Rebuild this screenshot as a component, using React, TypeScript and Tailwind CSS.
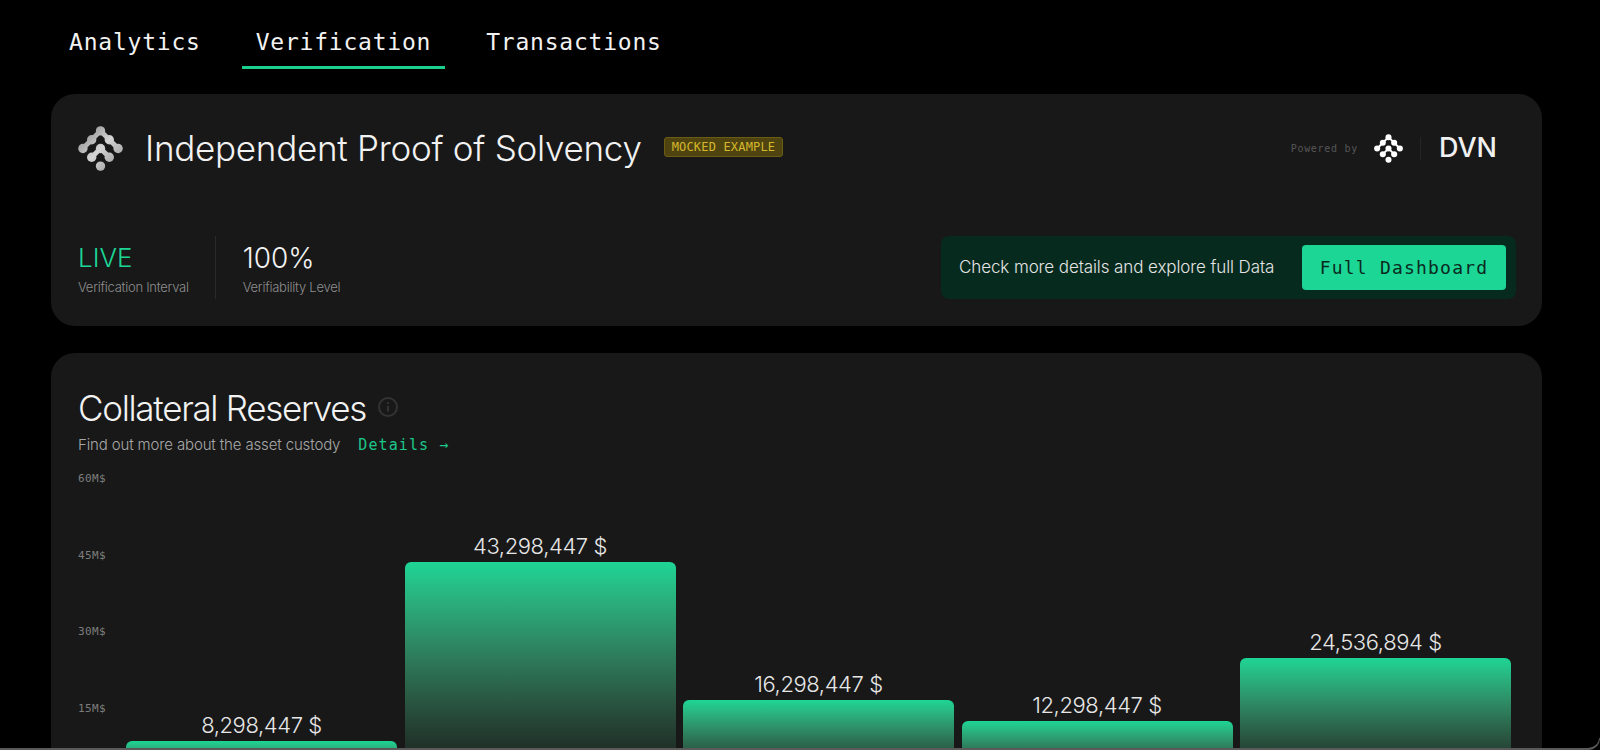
const bars = [
  { label: "8,298,447 $", height: "h-[43px]" },
  { label: "43,298,447 $", height: "h-[222px]" },
  { label: "16,298,447 $", height: "h-[84px]" },
  { label: "12,298,447 $", height: "h-[63px]" },
  { label: "24,536,894 $", height: "h-[126px]" },
];

const axis = ["60M$", "45M$", "30M$", "15M$"];

const mono = "font-['DejaVu_Sans_Mono',monospace]";

const dots = [
  [5, 23],
  [14, 14],
  [23, 5],
  [32, 14],
  [41, 23],
  [14, 32],
  [23, 23],
  [32, 32],
  [23, 41],
];

const Logo = ({ className, color, link }: { className: string; color: string; link: number }) => (
  <svg viewBox="0 0 46 46" className={className} fill="none">
    <defs>
      <linearGradient id="logo-shade" gradientUnits="userSpaceOnUse" x1="0" y1="0" x2="46" y2="46">
        <stop offset="0" stopColor="#7e7e7e" />
        <stop offset="0.5" stopColor="#d4d4d4" />
        <stop offset="1" stopColor="#8f8f8f" />
      </linearGradient>
    </defs>
    <path d="M5 23 L23 5 L41 23 M14 32 L23 23 L32 32" stroke={color} strokeWidth={link} />
    {dots.map(([cx, cy]) => (
      <circle key={`${cx}-${cy}`} cx={cx} cy={cy} r="4.8" fill={color} />
    ))}
  </svg>
);

const InfoIcon = () => (
  <svg viewBox="0 0 20 20" className="w-5 h-5 ml-3 mt-[-2px]" fill="none" stroke="#333333" strokeWidth="2">
    <circle cx="10" cy="10" r="9" />
    <path d="M10 9v5.5" />
    <path d="M10 5.2v1.8" />
  </svg>
);

const Tab = ({ label, active }: { label: string; active?: boolean }) => (
  <div
    className={`px-[14px] h-[69px] pt-[26px] text-[23px] leading-[32px] tracking-[0.78px] text-[#f2f2f2] ${mono} ${
      active ? "border-b-[3px] border-[#1bcf8f]" : ""
    }`}
  >
    {label}
  </div>
);

const Stat = ({ value, label, valueClass }: { value: string; label: string; valueClass: string }) => (
  <div className="pt-[3px]">
    <div className={`h-[32px] leading-[32px] font-light ${valueClass}`}>{value}</div>
    <div className="mt-[4px] text-[13px] leading-[18px] font-light tracking-[-0.25px] text-[#8e8e8e]">{label}</div>
  </div>
);

const App = () => {
  return (
    <div className="relative h-[750px] overflow-hidden bg-black pl-[51px] pr-[58px] font-['Inter',sans-serif]">
      <div className="flex gap-[27px] pl-[4px]">
        <Tab label="Analytics" />
        <Tab label="Verification" active />
        <Tab label="Transactions" />
      </div>

      <div className="mt-[25px] h-[232px] rounded-[24px] bg-[#181818] pl-[27px] pr-[26px] pt-[31px]">
        <div className="flex items-center h-[46px]">
          <Logo className="w-[45px] h-[45px]" color="url(#logo-shade)" link={5} />
          <h1 className="ml-[22px] text-[35px] leading-[46px] font-light tracking-[-0.27px] text-[#f2f2f2]">
            Independent Proof of Solvency
          </h1>
          <span className={`ml-[22px] mb-[2px] px-[7px] h-[20px] rounded-[3px] border border-[#6b5c14] bg-[#4f4310] text-[12px] leading-[18px] tracking-[0.17px] text-[#d4b82c] ${mono}`}>
            MOCKED EXAMPLE
          </span>
          <div className="ml-auto flex items-center pr-[19px]">
            <span className={`text-[10px] tracking-[0.7px] text-[#565656] ${mono}`}>Powered by</span>
            <Logo className="ml-[16px] w-[29px] h-[29px]" color="#ffffff" link={3} />
            <div className="ml-[17px] w-px h-[23px] bg-[#242424]" />
            <span className="ml-[18px] text-[27px] leading-[32px] font-medium text-[#f0f0f0]">DVN</span>
          </div>
        </div>

        <div className="mt-[65px] flex items-center">
          <Stat value="LIVE" label="Verification Interval" valueClass="text-[26px] text-[#1cd696]" />
          <div className="ml-[26px] mr-[27px] w-px h-[63px] bg-[#2a2a2a]" />
          <Stat value="100%" label="Verifiability Level" valueClass="text-[28px] text-[#f2f2f2]" />
          <div className="ml-auto flex items-center h-[63px] w-[575px] rounded-[8px] bg-[#062a1d] pl-[18px] pr-[10px]">
            <span className="text-[17px] font-light tracking-[-0.1px] text-[#e4e4e4]">Check more details and explore full Data</span>
            <button className={`ml-auto w-[204px] h-[45px] rounded-[4px] bg-[#1cd696] text-[18px] tracking-[1.2px] text-[#0a2a1e] ${mono}`}>
              Full Dashboard
            </button>
          </div>
        </div>
      </div>

      <div className="mt-[27px] rounded-[24px] bg-[#181818] pl-[27px] pr-[31px] pt-[32px] pb-[20px]">
        <div className="flex items-center">
          <h2 className="text-[35px] leading-[46px] font-light tracking-[-1.3px] text-[#f2f2f2]">Collateral Reserves</h2>
          <InfoIcon />
        </div>
        <div className="mt-[2px] flex items-center h-[24px]">
          <span className="text-[15px] font-light tracking-[-0.14px] text-[#a8a8a8]">Find out more about the asset custody</span>
          <span className={`ml-[18px] text-[15px] tracking-[1.1px] text-[#1cc78a] ${mono}`}>Details →</span>
        </div>

        <div className="mt-[14px] flex h-[313px]">
          <div className="w-[48px] shrink-0">
            {axis.map((tick) => (
              <div key={tick} className={`h-[76.7px] text-[11px] leading-[16px] tracking-[0.4px] text-[#7d7d7d] ${mono}`}>
                {tick}
              </div>
            ))}
          </div>
          <div className="flex-1 flex items-end gap-[7.5px]">
            {bars.map((bar) => (
              <div key={bar.label} className="flex-1 flex flex-col items-center">
                <div className="mb-[2px] text-[22px] leading-[28px] font-light tracking-[-0.4px] text-[#e6e6e6]">{bar.label}</div>
                <div className={`w-full rounded-t-[6px] bg-gradient-to-b from-[#1dd595] to-[#161616] ${bar.height}`} />
              </div>
            ))}
          </div>
        </div>
      </div>

      <div className="absolute left-0 right-0 bottom-0 h-[12px] border-b-[2px] border-r border-[#5a5a5a] rounded-br-[12px]" />
    </div>
  );
};

export default App;
